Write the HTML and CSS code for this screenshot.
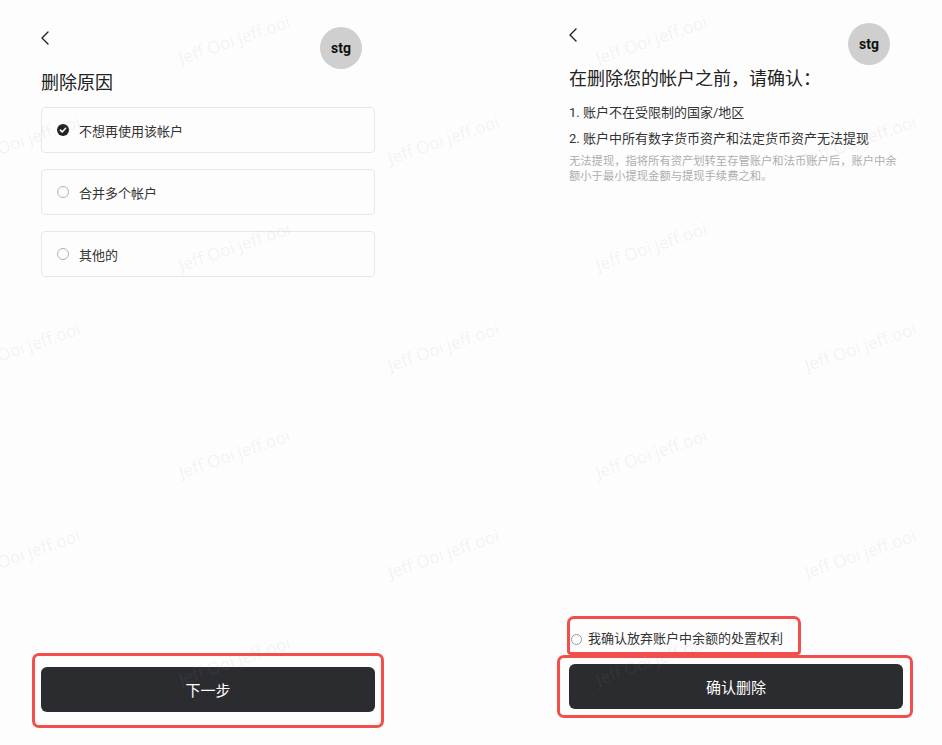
FILE: index.html
```html
<!DOCTYPE html>
<html lang="zh-CN">

<head>
    <meta charset="UTF-8" />
    <title>删除帐户</title>
    <link rel="stylesheet" href="styles.css">
</head>

<body>
    <div class="page">
        <section class="screen screen-reason">
            <div class="top-bar">
                <span class="back">
                    <svg width="8" height="14" viewBox="0 0 8 14"><path d="M7 1 L1 7 L7 13" fill="none" stroke="#222" stroke-width="1.4" stroke-linecap="round" stroke-linejoin="round"/></svg>
                </span>
                <span class="avatar">stg</span>
            </div>
            <h1 class="title">删除原因</h1>
            <ul class="options">
                <li class="option">
                    <span class="radio checked">
                        <svg width="12" height="12" viewBox="0 0 12 12"><circle cx="6" cy="6" r="6" fill="#222"/><path d="M3.4 6.1 L5.2 7.9 L8.6 4.3" fill="none" stroke="#fff" stroke-width="1.5" stroke-linecap="round" stroke-linejoin="round"/></svg>
                    </span>
                    不想再使用该帐户
                </li>
                <li class="option"><span class="radio"></span>合并多个帐户</li>
                <li class="option"><span class="radio"></span>其他的</li>
            </ul>
            <div class="bottom">
                <div class="mark mark-next">
                    <button class="btn">下一步</button>
                </div>
            </div>
        </section>

        <section class="screen screen-confirm">
            <div class="top-bar">
                <span class="back">
                    <svg width="8" height="14" viewBox="0 0 8 14"><path d="M7 1 L1 7 L7 13" fill="none" stroke="#222" stroke-width="1.4" stroke-linecap="round" stroke-linejoin="round"/></svg>
                </span>
                <span class="avatar">stg</span>
            </div>
            <h1 class="title">在删除您的帐户之前，请确认：</h1>
            <ol class="rules">
                <li>1. 账户不在受限制的国家/地区</li>
                <li>2. 账户中所有数字货币资产和法定货币资产无法提现</li>
            </ol>
            <p class="note">无法提现，指将所有资产划转至存管账户和法币账户后，账户中余额小于最小提现金额与提现手续费之和。</p>
            <div class="bottom">
                <div class="mark mark-agree">
                    <span class="radio small"></span>
                    我确认放弃账户中余额的处置权利
                </div>
                <div class="mark mark-delete">
                    <button class="btn">确认删除</button>
                </div>
            </div>
        </section>

        <!-- watermark overlay -->
        <div class="watermarks">
            <span class="wm" style="left: 176px; top: 32px;">Jeff Ooi jeff.ooi</span>
            <span class="wm" style="left: 593px; top: 32px;">Jeff Ooi jeff.ooi</span>
            <span class="wm" style="left: -34px; top: 132px;">Jeff Ooi jeff.ooi</span>
            <span class="wm" style="left: 385px; top: 132px;">Jeff Ooi jeff.ooi</span>
            <span class="wm" style="left: 802px; top: 132px;">Jeff Ooi jeff.ooi</span>
            <span class="wm" style="left: 176px; top: 239px;">Jeff Ooi jeff.ooi</span>
            <span class="wm" style="left: 593px; top: 239px;">Jeff Ooi jeff.ooi</span>
            <span class="wm" style="left: -34px; top: 339px;">Jeff Ooi jeff.ooi</span>
            <span class="wm" style="left: 385px; top: 339px;">Jeff Ooi jeff.ooi</span>
            <span class="wm" style="left: 802px; top: 339px;">Jeff Ooi jeff.ooi</span>
            <span class="wm" style="left: 176px; top: 446px;">Jeff Ooi jeff.ooi</span>
            <span class="wm" style="left: 593px; top: 446px;">Jeff Ooi jeff.ooi</span>
            <span class="wm" style="left: -34px; top: 546px;">Jeff Ooi jeff.ooi</span>
            <span class="wm" style="left: 385px; top: 546px;">Jeff Ooi jeff.ooi</span>
            <span class="wm" style="left: 802px; top: 546px;">Jeff Ooi jeff.ooi</span>
            <span class="wm" style="left: 176px; top: 653px;">Jeff Ooi jeff.ooi</span>
            <span class="wm" style="left: 593px; top: 653px;">Jeff Ooi jeff.ooi</span>
        </div>
    </div>
</body>

</html>
```

FILE: styles.css
```css
body {
    margin: 0;
    background: #fdfdfd;
    font-family: 'Roboto', 'Noto Sans CJK SC', sans-serif;
    color: #222;
}
.page {
    position: relative;
    width: 942px;
    height: 745px;
    display: flex;
    justify-content: space-between;
    overflow: hidden;
}
.screen {
    width: 414px;
    height: 745px;
    box-sizing: border-box;
    padding: 0 39px 0 41px;
    display: flex;
    flex-direction: column;
}
.top-bar {
    display: flex;
    justify-content: space-between;
    align-items: flex-start;
    height: 70px;
}
.back {
    display: block;
    width: 8px;
    height: 14px;
    margin-top: 31px;
}
.back svg {
    display: block;
}
.avatar {
    width: 42px;
    height: 42px;
    margin-top: 27px;
    margin-right: 13px;
    border-radius: 50%;
    background: #cfcfcf;
    display: flex;
    align-items: center;
    justify-content: center;
    font-size: 14px;
    font-weight: bold;
    color: #111;
}
.title {
    margin: 0;
    font-size: 18px;
    font-weight: normal;
    line-height: 26px;
    color: #222;
}
.options {
    list-style: none;
    margin: 11px 0 0 0;
    padding: 0;
    display: flex;
    flex-direction: column;
    gap: 16px;
}
.option {
    height: 46px;
    box-sizing: border-box;
    border: 1px solid #e7e7e7;
    border-radius: 4px;
    padding-left: 15px;
    display: flex;
    align-items: center;
    gap: 10px;
    font-size: 13px;
    color: #333;
}
.radio {
    width: 12px;
    height: 12px;
    box-sizing: border-box;
    border: 1px solid #b3b3b3;
    border-radius: 50%;
    flex-shrink: 0;
}
.radio.checked {
    border: none;
}
.radio svg {
    display: block;
}
.radio.small {
    width: 11px;
    height: 11px;
    border-color: #9a9a9a;
}
.bottom {
    margin-top: auto;
    display: flex;
    flex-direction: column;
}
.mark {
    border: 3px solid #f24e4b;
    border-radius: 7px;
}
.mark-next {
    margin: 0 -9px 17px -9px;
    padding: 11px 6px 13px 6px;
}
.btn {
    display: block;
    width: 100%;
    height: 45px;
    border: none;
    border-radius: 6px;
    background: #2b2c30;
    color: #fff;
    font-family: 'Roboto', 'Noto Sans CJK SC', sans-serif;
    font-size: 15px;
    cursor: pointer;
}

/* second screen */
.screen-confirm .top-bar {
    height: 66px;
}
.screen-confirm .back {
    margin-top: 28px;
}
.screen-confirm .avatar {
    margin-top: 23px;
}
.rules {
    list-style: none;
    margin: 11px 0 0 0;
    padding: 0;
    display: flex;
    flex-direction: column;
    gap: 6px;
}
.rules li {
    font-size: 13px;
    line-height: 20px;
    color: #333;
}
.note {
    margin: 5px 0 0 0;
    font-size: 11.3px;
    line-height: 15px;
    color: #adadad;
}
.mark-agree {
    align-self: flex-start;
    margin-left: -2px;
    padding: 10px 15px 3px 1px;
    display: flex;
    align-items: center;
    gap: 6px;
    font-size: 13px;
    line-height: 20px;
    color: #333;
    border-bottom-left-radius: 4px;
    border-bottom-right-radius: 4px;
}
.mark-delete {
    margin: 0 -10px 27px -12px;
    padding: 6px 7px 6px 9px;
}
.watermarks {
    position: absolute;
    inset: 0;
    pointer-events: none;
}
.wm {
    position: absolute;
    font-family: 'Open Sans', sans-serif;
    font-size: 17px;
    line-height: 16px;
    white-space: nowrap;
    color: rgba(140, 140, 140, 0.1);
    transform: rotate(-19deg);
    transform-origin: center center;
}
```
